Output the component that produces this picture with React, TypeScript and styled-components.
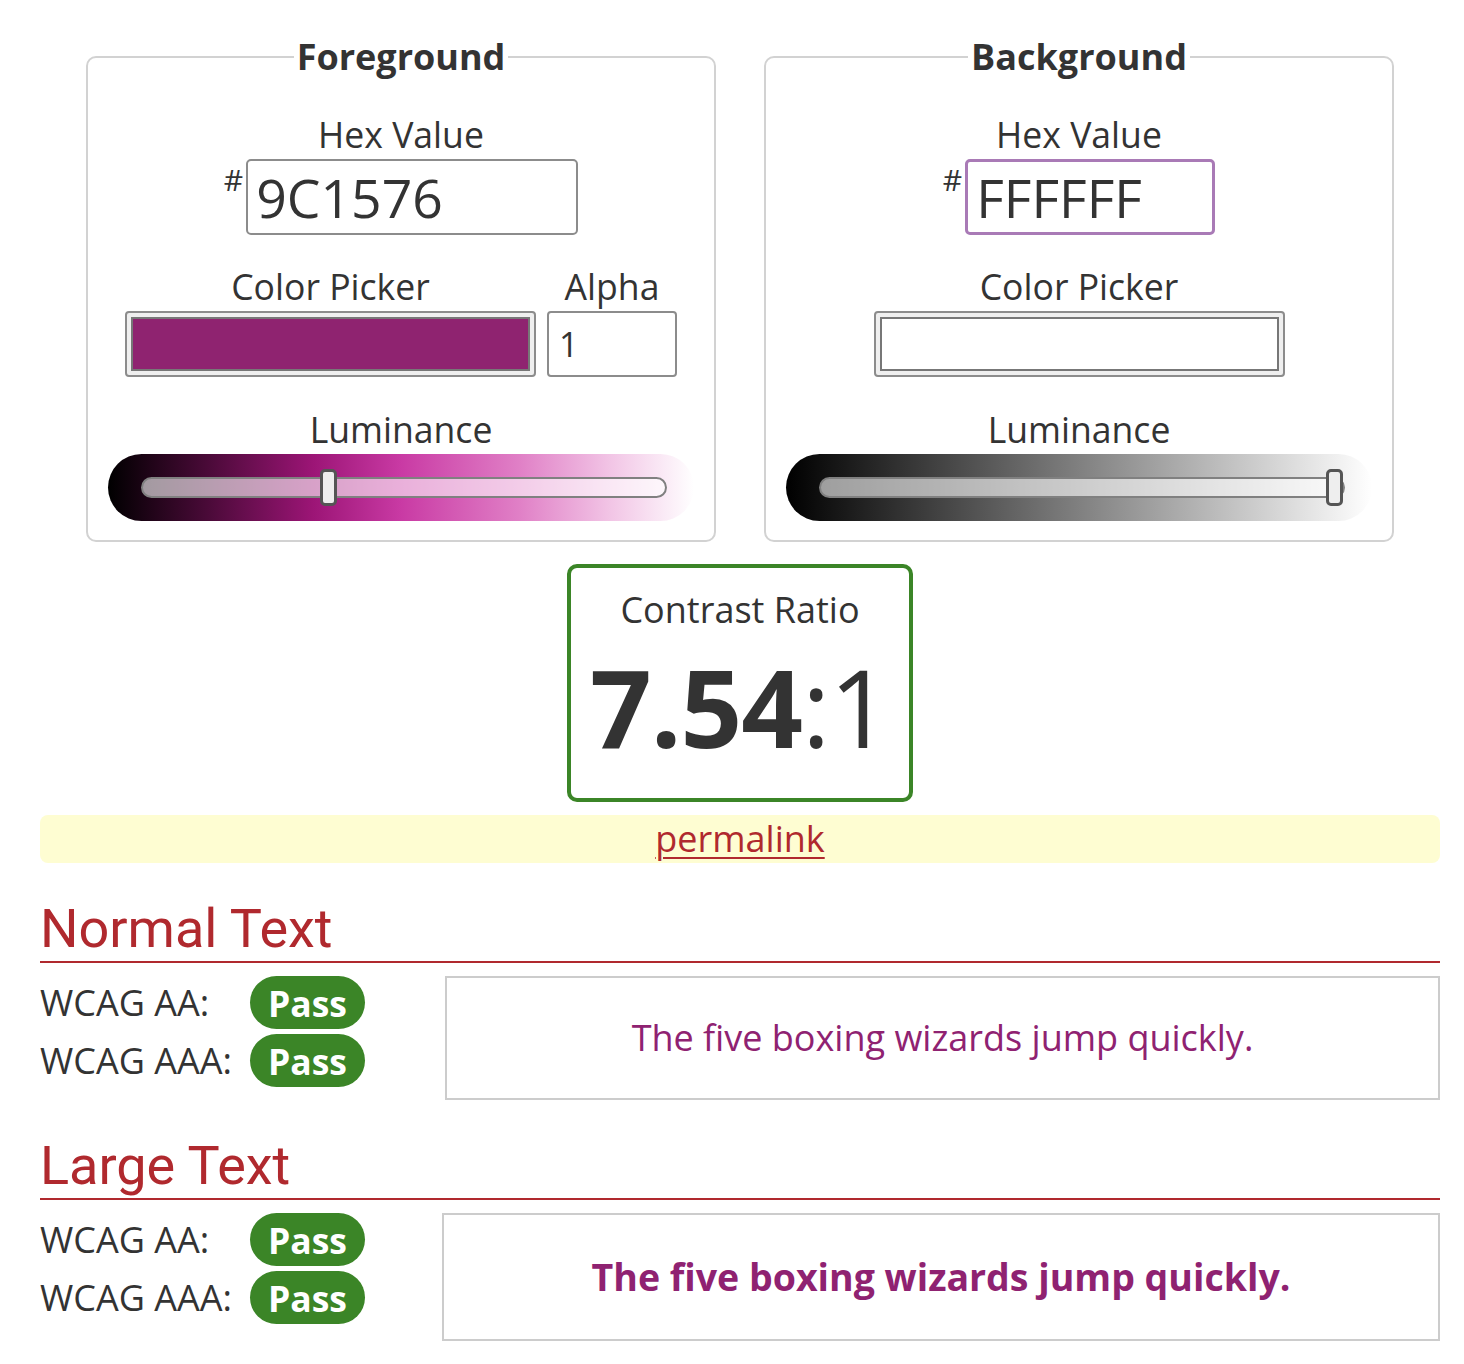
import React from "react";
import styled, { createGlobalStyle } from "styled-components";

const GlobalStyle = createGlobalStyle`
  html, body { margin: 0; padding: 0; background: #fff; }
  body {
    font-family: "Open Sans", "Noto Sans", sans-serif;
    color: #333;
  }
  * { box-sizing: border-box; }
`;

const Page = styled.main`
  padding: 34px 24px 23px 40px;
`;

const Panels = styled.div`
  display: flex;
  justify-content: center;
  gap: 48px;
`;

const Panel = styled.fieldset`
  width: 630px;
  margin: 0;
  padding: 32px 0 19px;
  border: 2px solid #d2d2d2;
  border-radius: 10px;
  display: flex;
  flex-direction: column;
  align-items: center;
  min-width: 0;
`;

const Legend = styled.legend`
  margin: 0 auto;
  padding: 0 3px;
  font-size: 36px;
  line-height: 46px;
  font-weight: 700;
  color: #333;
`;

const Field = styled.div<{ $gapTop?: number }>`
  display: flex;
  flex-direction: column;
  align-items: center;
  margin-top: ${(p) => p.$gapTop ?? 0}px;
`;

const Label = styled.label`
  display: block;
  font-size: 35.6px;
  line-height: 44px;
  margin-bottom: 3px;
  text-align: center;
  white-space: nowrap;
`;

const HexRow = styled.div`
  display: flex;
  align-items: flex-start;
  gap: 3px;
`;

const Hash = styled.span`
  font-size: 30px;
  line-height: 30px;
  margin-top: 6px;
`;

const HexInput = styled.input<{ $w: number; $focused?: boolean }>`
  width: ${(p) => p.$w}px;
  height: 76px;
  padding: 0 8px;
  font-family: "Open Sans", sans-serif;
  font-size: 53.5px;
  color: #333;
  background: #fff;
  border: ${(p) => (p.$focused ? "3px solid #a97ab6" : "2px solid #8c8c8c")};
  border-radius: 5px;
  outline: none;
`;

const PickerRow = styled.div`
  display: flex;
  align-items: flex-end;
  gap: 11px;
`;

const ColorInput = styled.input`
  -webkit-appearance: none;
  appearance: none;
  width: 411px;
  height: 66px;
  padding: 0;
  margin: 0;
  background: #efefef;
  border: 2px solid #8c8c8c;
  border-radius: 4px;
  cursor: pointer;
  &::-webkit-color-swatch-wrapper {
    padding: 4px;
  }
  &::-webkit-color-swatch {
    border: 2px solid #777;
    border-radius: 0;
  }
`;

const AlphaInput = styled.input`
  width: 130px;
  height: 66px;
  padding: 0 10px;
  font-family: "Open Sans", sans-serif;
  font-size: 34px;
  color: #333;
  background: #fff;
  border: 2px solid #8c8c8c;
  border-radius: 4px;
  outline: none;
`;

const SliderShell = styled.div<{ $gradient: string }>`
  width: 586px;
  height: 67px;
  padding: 0 27px 0 33px;
  border-radius: 34px;
  background: ${(p) => p.$gradient};
  display: flex;
  align-items: center;
`;

const Range = styled.input`
  -webkit-appearance: none;
  appearance: none;
  width: 100%;
  height: 40px;
  margin: 0;
  background: transparent;
  &::-webkit-slider-runnable-track {
    height: 21px;
    border: 2px solid #808080;
    border-radius: 11px;
    background: rgba(255, 255, 255, 0.6);
    box-sizing: border-box;
  }
  &::-webkit-slider-thumb {
    -webkit-appearance: none;
    appearance: none;
    box-sizing: border-box;
    width: 17px;
    height: 37px;
    margin-top: -10px;
    border-radius: 5px;
    background: #eeeeee;
    border: 3px solid #555;
  }
`;

const RatioBox = styled.section`
  margin: 22px auto 0;
  width: fit-content;
  border: 4px solid #3b8527;
  border-radius: 10px;
  padding: 18px 19px 37px;
  text-align: center;
`;

const RatioLabel = styled.div`
  font-size: 36px;
  line-height: 48px;
`;

const RatioValue = styled.div`
  margin-top: 19px;
  font-size: 108px;
  line-height: 108px;
  letter-spacing: -1px;
  color: #333;
  strong { font-weight: 700; }
`;

const PermaBar = styled.div`
  margin-top: 13px;
  height: 48px;
  background: #fefdd2;
  border-radius: 8px;
  text-align: center;
  font-size: 36px;
  line-height: 48px;
  a {
    color: #b0292e;
    text-decoration: underline;
    text-decoration-thickness: 2px;
    text-underline-offset: 5px;
  }
`;

const SectionTitle = styled.h2`
  margin: 35px 0 0;
  padding: 0 0 1px;
  font-family: Roboto, "Open Sans", sans-serif;
  font-weight: 400;
  font-size: 54px;
  line-height: 62px;
  color: #b0292e;
  border-bottom: 2px solid #b0292e;
`;

const Results = styled.div`
  margin-top: 13px;
  display: flex;
  align-items: flex-start;
`;

const Checks = styled.div`
  display: grid;
  grid-template-columns: 210px 115px;
  row-gap: 5px;
  flex: none;
`;

const CheckLabel = styled.span`
  font-size: 36px;
  line-height: 53px;
  color: #333;
  white-space: nowrap;
`;

const Badge = styled.span`
  display: flex;
  align-items: center;
  justify-content: center;
  height: 53px;
  border-radius: 27px;
  background: #3b8527;
  color: #fff;
  font-weight: 700;
  font-size: 35.5px;
`;

const Sample = styled.div<{ $large?: boolean }>`
  flex: 1;
  margin-left: ${(p) => (p.$large ? 77 : 80)}px;
  border: 2px solid #cccccc;
  padding: ${(p) => (p.$large ? "37px 0" : "36px 0")};
  text-align: center;
  color: #8f2271;
  font-size: ${(p) => (p.$large ? 37.5 : 36)}px;
  line-height: ${(p) => (p.$large ? 50 : 48)}px;
  font-weight: ${(p) => (p.$large ? 700 : 400)};
`;

const fgGradient =
  "linear-gradient(to right, #000 0%, #4a0a38 17%, #9c1576 35%, #c93aa4 50%, #e07fc6 70%, #f2c6e6 86%, #fff 100%)";
const bgGradient = "linear-gradient(to right, #000 0%, #808080 50%, #fff 100%)";

type PanelProps = {
  title: string;
  hex: string;
  hexWidth: number;
  focused?: boolean;
  color: string;
  alpha?: boolean;
  lum: number;
  gradient: string;
};

function ColorPanel({ title, hex, hexWidth, focused, color, alpha, lum, gradient }: PanelProps) {
  return (
    <Panel>
      <Legend>{title}</Legend>
      <Field>
        <Label>Hex Value</Label>
        <HexRow>
          <Hash>#</Hash>
          <HexInput $w={hexWidth} $focused={focused} defaultValue={hex} />
        </HexRow>
      </Field>
      <Field $gapTop={29}>
        <PickerRow>
          <Field>
            <Label>Color Picker</Label>
            <ColorInput type="color" defaultValue={color} />
          </Field>
          {alpha && (
            <Field>
              <Label>Alpha</Label>
              <AlphaInput defaultValue="1" />
            </Field>
          )}
        </PickerRow>
      </Field>
      <Field $gapTop={30}>
        <Label>Luminance</Label>
        <SliderShell $gradient={gradient}>
          <Range type="range" min={0} max={100} step={0.1} defaultValue={lum} />
        </SliderShell>
      </Field>
    </Panel>
  );
}

function ResultSection({ title, large }: { title: string; large?: boolean }) {
  return (
    <>
      <SectionTitle>{title}</SectionTitle>
      <Results>
        <Checks>
          <CheckLabel>WCAG AA:</CheckLabel>
          <Badge>Pass</Badge>
          <CheckLabel>WCAG AAA:</CheckLabel>
          <Badge>Pass</Badge>
        </Checks>
        <Sample $large={large}>The five boxing wizards jump quickly.</Sample>
      </Results>
    </>
  );
}

export default function App() {
  return (
    <>
      <GlobalStyle />
      <Page>
        <Panels>
          <ColorPanel
            title="Foreground"
            hex="9C1576"
            hexWidth={332}
            color="#8f2370"
            alpha
            lum={35}
            gradient={fgGradient}
          />
          <ColorPanel
            title="Background"
            hex="FFFFFF"
            hexWidth={250}
            focused
            color="#ffffff"
            lum={100}
            gradient={bgGradient}
          />
        </Panels>
        <RatioBox>
          <RatioLabel>Contrast Ratio</RatioLabel>
          <RatioValue>
            <strong>7.54</strong>:1
          </RatioValue>
        </RatioBox>
        <PermaBar>
          <a href="#permalink">permalink</a>
        </PermaBar>
        <ResultSection title="Normal Text" />
        <ResultSection title="Large Text" large />
      </Page>
    </>
  );
}
